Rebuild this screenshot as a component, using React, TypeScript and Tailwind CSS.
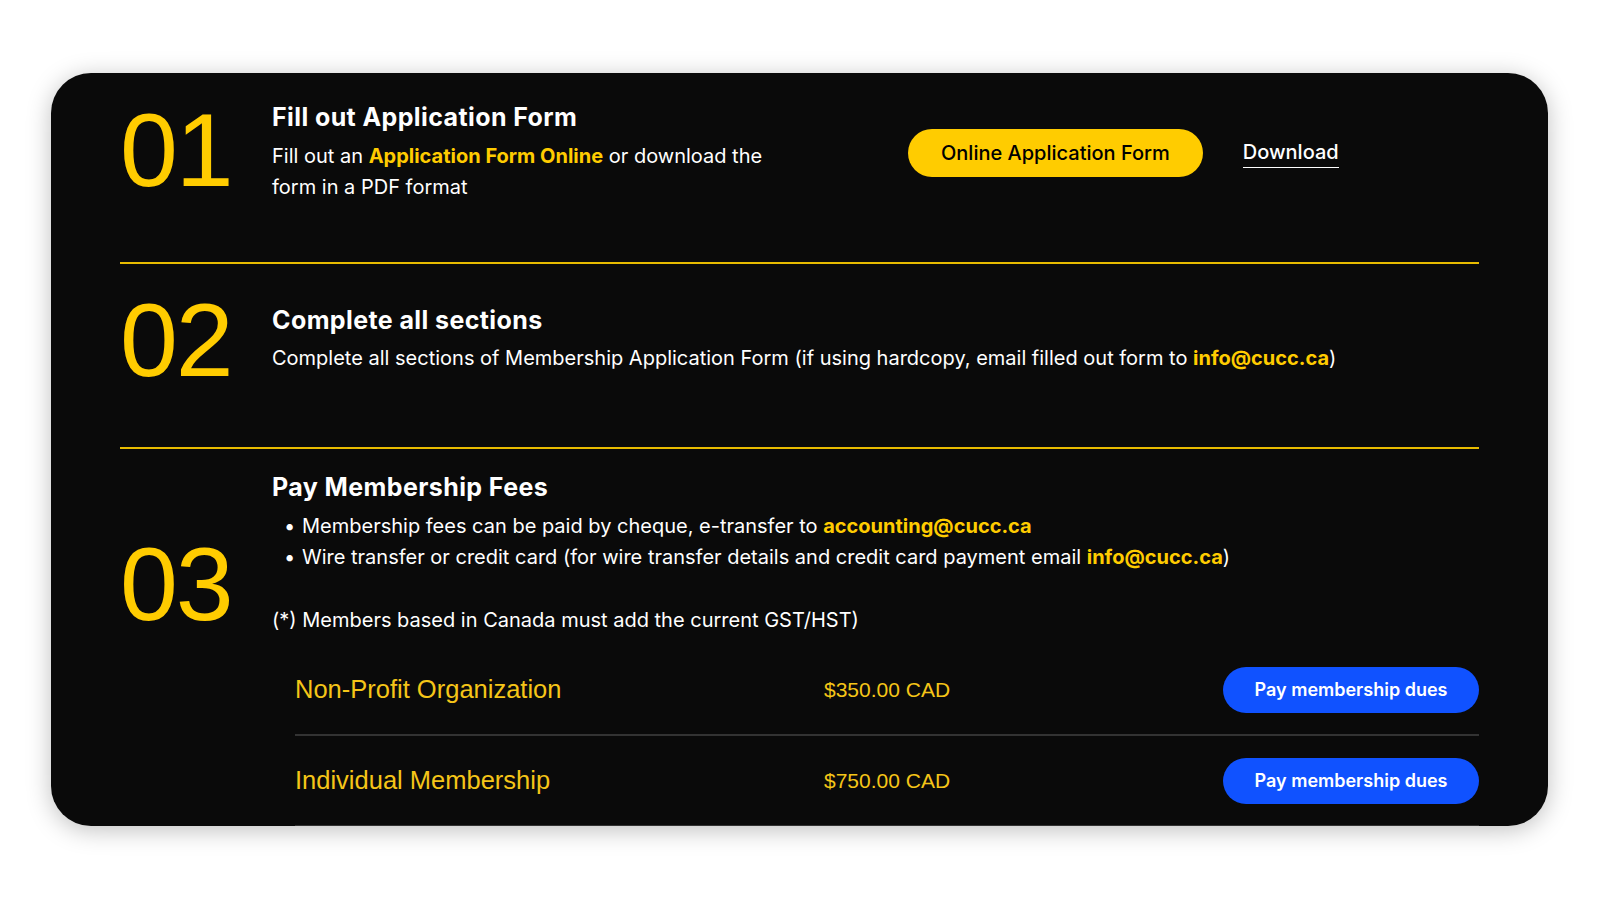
import React from "react";

const rubik = { fontFamily: "Inter, 'Noto Sans', sans-serif" };

function Num({ n, mt }: { n: string; mt: string }) {
  return (
    <div className={`w-[152px] shrink-0 ${mt}`}>
      <div className="text-[104px] leading-none text-[#FFCC00] font-['Liberation_Sans',Arial,sans-serif] tracking-[-2px]">
        {n}
      </div>
    </div>
  );
}

function Row({ name, price }: { name: string; price: string }) {
  return (
    <div className="flex items-center h-[91px] border-b-2 border-[#333333]">
      <div className="w-[529px] shrink-0 text-[25.5px] text-[#F5C518] font-['Liberation_Sans',Arial,sans-serif]">
        {name}
      </div>
      <div className="flex-1 text-[21px] text-[#F5C518] font-['Liberation_Sans',Arial,sans-serif]">
        {price}
      </div>
      <button className="h-[46px] w-[256px] rounded-full bg-[#1052FF] text-white text-[18px] font-semibold font-['Inter',sans-serif]">
        Pay membership dues
      </button>
    </div>
  );
}

const titleCls = "text-[25px] tracking-[0.4px] leading-[32px] font-bold text-white";

export default function App() {
  return (
    <div className="w-[1600px] h-[900px] bg-white pl-[51px] pt-[73px]">
      <div className="w-[1497px] h-[753px] rounded-[40px] bg-[#0a0a0a] overflow-hidden shadow-[0_4px_24px_rgba(0,0,0,0.25)] pl-[69px] pr-[69px]" style={rubik}>
        {/* Section 1 */}
        <div className="flex h-[191px] border-b-2 border-[#E8BC00]">
          <Num n="01" mt="mt-[25px]" />
          <div className="flex pt-[28px]">
            <div className="w-[510px]">
              <div className={titleCls}>Fill out Application Form</div>
              <p className="mt-[8px] text-[20px] leading-[31px] text-white">
                Fill out an <span className="font-bold text-[#FFCC00]">Application Form Online</span> or download the form in a PDF format
              </p>
            </div>
            <div className="ml-[126px] mt-[28px] flex items-start">
              <button className="h-[48px] px-[33px] rounded-full bg-[#FFCC00] text-black text-[20px] font-medium">
                Online Application Form
              </button>
              <span className="ml-[40px] mt-[11px] pb-[3px] text-[20px] font-medium text-white border-b border-white leading-[24px]">
                Download
              </span>
            </div>
          </div>
        </div>
        {/* Section 2 */}
        <div className="flex h-[185px] border-b-2 border-[#E8BC00]">
          <Num n="02" mt="mt-[24px]" />
          <div className="pt-[40px]">
            <div className={titleCls}>Complete all sections</div>
            <p className="mt-[6px] text-[20px] leading-[32px] text-white">
              Complete all sections of Membership Application Form (if using hardcopy, email filled out form to{" "}
              <span className="font-bold text-[#FFCC00]">info@cucc.ca</span>)
            </p>
          </div>
        </div>
        {/* Section 3 */}
        <div className="flex">
          <Num n="03" mt="mt-[83px]" />
          <div className="flex-1 pt-[22px]">
            <div className={titleCls}>Pay Membership Fees</div>
            <ul className="mt-[8px] text-[20px] leading-[31px] text-white">
              <li className="flex">
                <span className="w-[30px] pl-[12px]">•</span>
                <span>
                  Membership fees can be paid by cheque, e-transfer to{" "}
                  <span className="font-bold text-[#FFCC00]">accounting@cucc.ca</span>
                </span>
              </li>
              <li className="flex">
                <span className="w-[30px] pl-[12px]">•</span>
                <span>
                  Wire transfer or credit card (for wire transfer details and credit card payment email{" "}
                  <span className="font-bold text-[#FFCC00]">info@cucc.ca</span>)
                </span>
              </li>
            </ul>
            <div className="mt-[31px] text-[20px] leading-[32px] text-white">
              (*) Members based in Canada must add the current GST/HST)
            </div>
            <div className="mt-[9px] ml-[23px]">
              <Row name="Non-Profit Organization" price="$350.00 CAD" />
              <Row name="Individual Membership" price="$750.00 CAD" />
            </div>
          </div>
        </div>
      </div>
    </div>
  );
}
